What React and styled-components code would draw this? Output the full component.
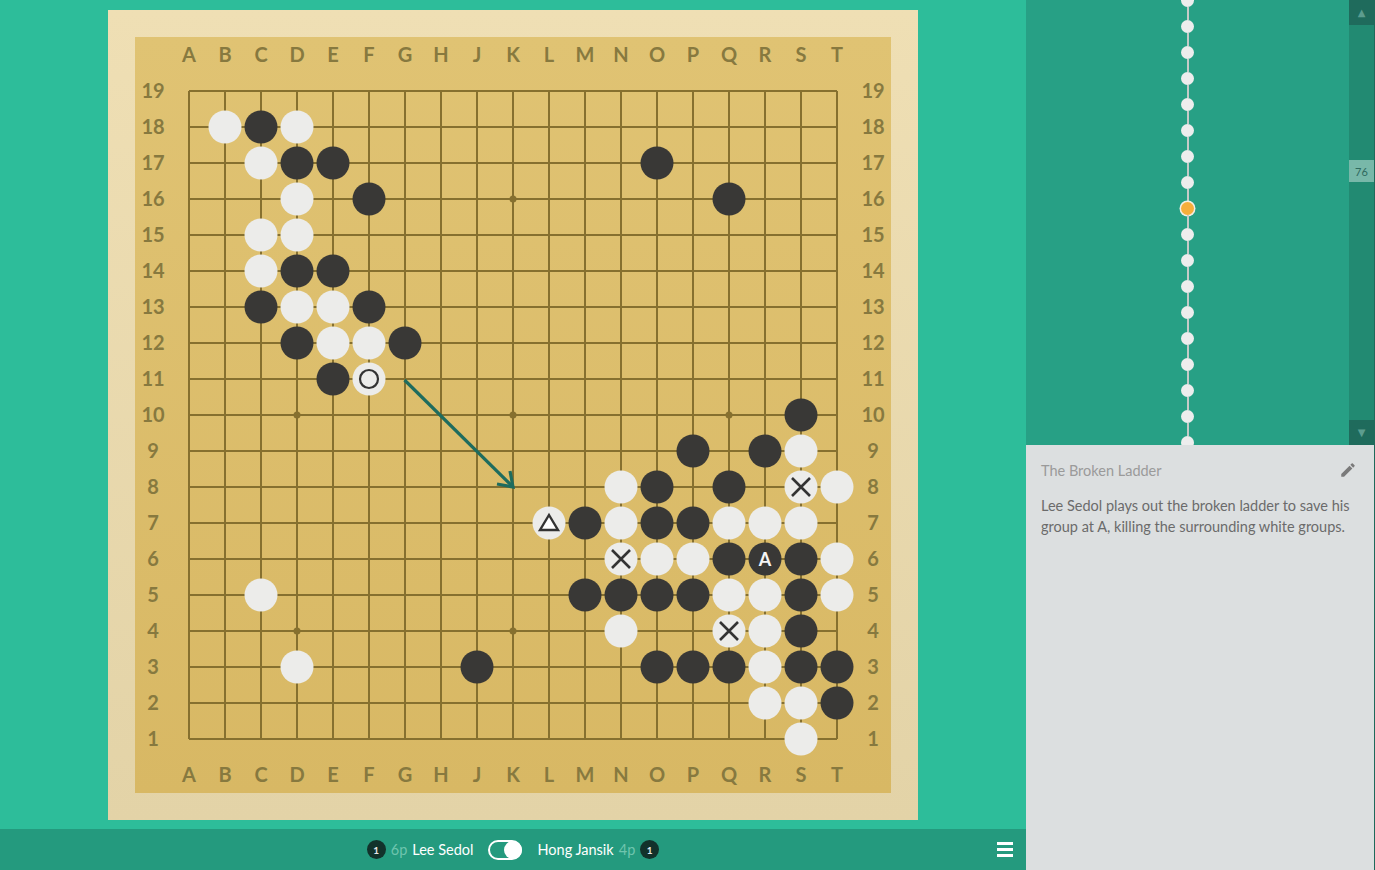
import React from 'react';
import styled, { createGlobalStyle } from 'styled-components';

const GlobalStyle = createGlobalStyle`
	html, body {
		margin: 0;
		padding: 0;
		background: #2dbd9a;
		overflow: hidden;
	}
	* {
		box-sizing: border-box;
	}
`;

const CELL = 36;
const LETTERS = 'ABCDEFGHJKLMNOPQRST'.split('');
const STARS = [3, 9, 15];

// [column letter, row number, colour, marker]
const STONES = [
	['B', 18, 'w'], ['C', 18, 'b'], ['D', 18, 'w'],
	['C', 17, 'w'], ['D', 17, 'b'], ['E', 17, 'b'], ['O', 17, 'b'],
	['D', 16, 'w'], ['F', 16, 'b'], ['Q', 16, 'b'],
	['C', 15, 'w'], ['D', 15, 'w'],
	['C', 14, 'w'], ['D', 14, 'b'], ['E', 14, 'b'],
	['C', 13, 'b'], ['D', 13, 'w'], ['E', 13, 'w'], ['F', 13, 'b'],
	['D', 12, 'b'], ['E', 12, 'w'], ['F', 12, 'w'], ['G', 12, 'b'],
	['E', 11, 'b'], ['F', 11, 'w', 'circle'],
	['S', 10, 'b'],
	['P', 9, 'b'], ['R', 9, 'b'], ['S', 9, 'w'],
	['N', 8, 'w'], ['O', 8, 'b'], ['Q', 8, 'b'], ['S', 8, 'w', 'cross'], ['T', 8, 'w'],
	['L', 7, 'w', 'triangle'], ['M', 7, 'b'], ['N', 7, 'w'], ['O', 7, 'b'], ['P', 7, 'b'], ['Q', 7, 'w'], ['R', 7, 'w'], ['S', 7, 'w'],
	['N', 6, 'w', 'cross'], ['O', 6, 'w'], ['P', 6, 'w'], ['Q', 6, 'b'], ['R', 6, 'b', 'A'], ['S', 6, 'b'], ['T', 6, 'w'],
	['C', 5, 'w'], ['M', 5, 'b'], ['N', 5, 'b'], ['O', 5, 'b'], ['P', 5, 'b'], ['Q', 5, 'w'], ['R', 5, 'w'], ['S', 5, 'b'], ['T', 5, 'w'],
	['N', 4, 'w'], ['Q', 4, 'w', 'cross'], ['R', 4, 'w'], ['S', 4, 'b'],
	['D', 3, 'w'], ['J', 3, 'b'], ['O', 3, 'b'], ['P', 3, 'b'], ['Q', 3, 'b'], ['R', 3, 'w'], ['S', 3, 'b'], ['T', 3, 'b'],
	['R', 2, 'w'], ['S', 2, 'w'], ['T', 2, 'b'],
	['S', 1, 'w'],
];

const px = (col) => 18 + CELL * LETTERS.indexOf(col);
const py = (row) => 18 + CELL * (19 - row);

const Layout = styled.div`
	display: flex;
	width: 1375px;
	height: 870px;
`;

const Main = styled.main`
	flex: 1;
	display: flex;
	flex-direction: column;
`;

const Stage = styled.section`
	flex: 1;
	display: flex;
	align-items: center;
	justify-content: center;
`;

const Frame = styled.div`
	padding: 27px;
	background: linear-gradient(#efdfb4, #e3d3a7);
`;

const Board = styled.div`
	display: grid;
	grid-template-columns: repeat(21, ${CELL}px);
	grid-template-rows: repeat(21, ${CELL}px);
	background: linear-gradient(#e0c373, #d8b864);
`;

const Coord = styled.div`
	display: flex;
	align-items: center;
	justify-content: center;
	font-family: Lato, 'DejaVu Sans', sans-serif;
	font-weight: 700;
	font-size: 20px;
	color: #87793f;
	grid-column: ${(p) => p.$col};
	grid-row: ${(p) => p.$row};
	padding-bottom: 1px;
`;

const Surface = styled.svg`
	grid-column: 2 / span 19;
	grid-row: 2 / span 19;
	width: ${CELL * 19}px;
	height: ${CELL * 19}px;
	display: block;
`;

const PlayerBar = styled.footer`
	height: 41px;
	background: #249a7e;
	display: flex;
	align-items: center;
	justify-content: center;
	position: relative;
	font-family: Lato, 'Open Sans', sans-serif;
	font-size: 14.5px;
	color: #fff;
`;

const Player = styled.div`
	display: flex;
	align-items: center;
	gap: 5px;
	flex-direction: ${(p) => (p.$reverse ? 'row-reverse' : 'row')};
`;

const Captures = styled.span`
	width: 19px;
	height: 19px;
	border-radius: 50%;
	background: #12322b;
	color: #e8e8e8;
	font-size: 10px;
	font-weight: 700;
	display: flex;
	align-items: center;
	justify-content: center;
`;

const Rank = styled.span`
	color: #6fc5ae;
`;

const Toggle = styled.div`
	width: 34px;
	height: 20px;
	margin: 0 15px;
	border: 2px solid #fff;
	border-radius: 10px;
	display: flex;
	justify-content: flex-end;
	align-items: center;

	&::after {
		content: '';
		width: 18px;
		height: 18px;
		margin-right: -2px;
		border-radius: 50%;
		background: #fff;
	}
`;

const Menu = styled.button`
	position: absolute;
	right: 13px;
	top: 13px;
	width: 16px;
	height: 15px;
	padding: 0;
	border: 0;
	background: transparent;
	display: flex;
	flex-direction: column;
	justify-content: space-between;
	cursor: pointer;

	span {
		display: block;
		height: 3px;
		background: #fff;
	}
`;

const Side = styled.aside`
	width: 349px;
	display: flex;
	flex-direction: column;
	border-right: 1px solid #1f6a5b;
`;

const TreeArea = styled.div`
	height: 445px;
	display: flex;
	background: #27a085;
`;

const Tree = styled.div`
	flex: 1;
	overflow: hidden;
	display: flex;
	justify-content: center;
	align-items: flex-start;
`;

const NodeList = styled.div`
	margin-top: -6px;
	display: flex;
	flex-direction: column;
	align-items: center;
	flex-shrink: 0;
`;

const Link = styled.div`
	flex-shrink: 0;
	width: 2px;
	height: 13px;
	background: #c5cbc8;
`;

const Node = styled.div`
	flex-shrink: 0;
	width: 13px;
	height: 13px;
	border-radius: 50%;
	background: ${(p) => (p.$current ? '#f6ae3b' : '#ededed')};
	box-shadow: ${(p) => (p.$current ? '0 0 0 1.5px #f3eee4' : 'none')};
`;

const Scrollbar = styled.div`
	width: 25px;
	display: flex;
	flex-direction: column;
	background: #228a72;
`;

const ScrollButton = styled.div`
	height: 25px;
	background: #1f6b5c;
	color: #5c9d8f;
	font-size: 10px;
	display: flex;
	align-items: center;
	justify-content: center;
	font-family: 'DejaVu Sans', sans-serif;
`;

const Track = styled.div`
	flex: 1;
	padding-top: 135px;
`;

const Thumb = styled.div`
	height: 22px;
	background: #78b8a9;
	color: #2f6a5f;
	font-family: Lato, sans-serif;
	font-size: 11px;
	display: flex;
	align-items: center;
	justify-content: center;
`;

const Comment = styled.div`
	flex: 1;
	background: #dcdfe0;
	padding: 15px 17px 0 15px;
	font-family: Lato, 'Open Sans', sans-serif;
	font-size: 14.5px;
`;

const CommentHead = styled.div`
	display: flex;
	align-items: center;
	justify-content: space-between;
	height: 20px;
`;

const Title = styled.h3`
	margin: 0;
	font-weight: 400;
	font-size: 14.5px;
	color: #9a9a9a;
`;

const Body = styled.p`
	margin: 15px 0 0;
	line-height: 21px;
	color: #6b6b6b;
`;

function Stone({ col, row, color, marker }) {
	const x = px(col);
	const y = py(row);
	const ink = color === 'b' ? '#f4f4f4' : '#333';
	return (
		<g>
			<circle cx={x} cy={y} r={16.5} fill={color === 'b' ? '#393836' : '#ececea'} />
			{marker === 'circle' && <circle cx={x} cy={y} r={9} fill="none" stroke={ink} strokeWidth={2.2} />}
			{marker === 'cross' && (
				<path
					d={`M${x - 9} ${y - 9} L${x + 9} ${y + 9} M${x + 9} ${y - 9} L${x - 9} ${y + 9}`}
					stroke={ink}
					strokeWidth={2.6}
				/>
			)}
			{marker === 'triangle' && (
				<polygon
					points={`${x},${y - 8} ${x + 9},${y + 7} ${x - 9},${y + 7}`}
					fill="#fff"
					stroke={ink}
					strokeWidth={2.4}
					strokeLinejoin="miter"
				/>
			)}
			{marker === 'A' && (
				<text
					x={x}
					y={y + 6.5}
					textAnchor="middle"
					fontFamily="Lato, 'DejaVu Sans', sans-serif"
					fontWeight="700"
					fontSize="18"
					fill={ink}
				>
					A
				</text>
			)}
		</g>
	);
}

function GoBoard() {
	const edge = [];
	LETTERS.forEach((l, i) => {
		edge.push(<Coord key={`t${l}`} $col={i + 2} $row={1}>{l}</Coord>);
		edge.push(<Coord key={`b${l}`} $col={i + 2} $row={21}>{l}</Coord>);
	});
	for (let i = 0; i < 19; i++) {
		const n = 19 - i;
		edge.push(<Coord key={`l${n}`} $col={1} $row={i + 2}>{n}</Coord>);
		edge.push(<Coord key={`r${n}`} $col={21} $row={i + 2}>{n}</Coord>);
	}

	const lines = [];
	for (let i = 0; i < 19; i++) {
		const p = 18 + i * CELL;
		lines.push(<line key={`h${i}`} x1={18} y1={p} x2={666} y2={p} />);
		lines.push(<line key={`v${i}`} x1={p} y1={18} x2={p} y2={666} />);
	}

	return (
		<Frame>
			<Board>
				{edge}
				<Surface viewBox="0 0 684 684">
					<g stroke="#86702f" strokeWidth={1.3} shapeRendering="crispEdges">
						{lines}
					</g>
					{STARS.map((a) =>
						STARS.map((b) => (
							<circle key={`${a}-${b}`} cx={18 + a * CELL} cy={18 + b * CELL} r={3.5} fill="#86702f" />
						))
					)}
					{STONES.map(([col, row, color, marker]) => (
						<Stone key={`${col}${row}`} col={col} row={row} color={color} marker={marker} />
					))}
					<g stroke="#1e6c5e" strokeWidth={3.2} fill="none" strokeLinecap="butt">
						<line x1={px('G') - 0.5} y1={py(11) + 1} x2={px('K') - 1} y2={py(8) - 1} />
						<path d={`M${px('K') - 16} ${py(8) - 3} L${px('K')} ${py(8)} L${px('K') - 3} ${py(8) - 16}`} />
					</g>
				</Surface>
			</Board>
		</Frame>
	);
}

function MoveTree() {
	const nodes = [];
	for (let i = 0; i < 18; i++) {
		if (i > 0) nodes.push(<Link key={`l${i}`} />);
		nodes.push(<Node key={`n${i}`} $current={i === 8} />);
	}
	return (
		<TreeArea>
			<Tree>
				<NodeList>{nodes}</NodeList>
			</Tree>
			<Scrollbar>
				<ScrollButton>▲</ScrollButton>
				<Track>
					<Thumb>76</Thumb>
				</Track>
				<ScrollButton>▼</ScrollButton>
			</Scrollbar>
		</TreeArea>
	);
}

function PencilIcon() {
	return (
		<svg width="18" height="18" viewBox="0 0 24 24" fill="#7a7a7a">
			<path d="M3 17.25V21h3.75L17.81 9.94l-3.75-3.75L3 17.25zM20.71 7.04c.39-.39.39-1.02 0-1.41l-2.34-2.34c-.39-.39-1.02-.39-1.41 0l-1.83 1.83 3.75 3.75 1.83-1.83z" />
		</svg>
	);
}

export default function App() {
	return (
		<>
			<GlobalStyle />
			<Layout>
				<Main>
					<Stage>
						<GoBoard />
					</Stage>
					<PlayerBar>
						<Player>
							<Captures>1</Captures>
							<Rank>6p</Rank>
							<span>Lee Sedol</span>
						</Player>
						<Toggle />
						<Player $reverse>
							<Captures>1</Captures>
							<Rank>4p</Rank>
							<span>Hong Jansik</span>
						</Player>
						<Menu aria-label="menu">
							<span />
							<span />
							<span />
						</Menu>
					</PlayerBar>
				</Main>
				<Side>
					<MoveTree />
					<Comment>
						<CommentHead>
							<Title>The Broken Ladder</Title>
							<PencilIcon />
						</CommentHead>
						<Body>
							Lee Sedol plays out the broken ladder to save his group at A, killing the surrounding white
							groups.
						</Body>
					</Comment>
				</Side>
			</Layout>
		</>
	);
}
